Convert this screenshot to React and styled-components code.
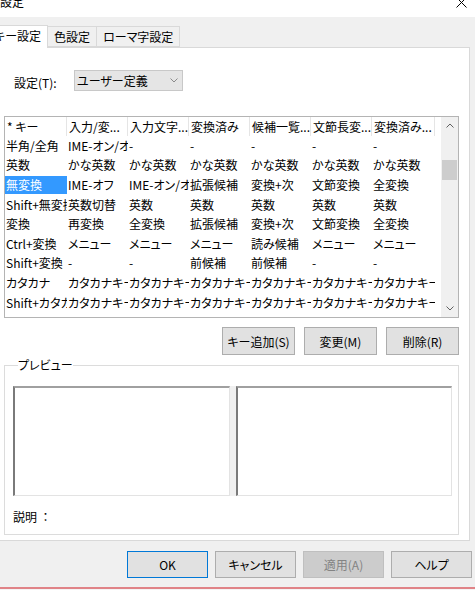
import React from 'react';
import styled, { createGlobalStyle } from 'styled-components';

const GlobalStyle = createGlobalStyle`
  html, body {
    margin: 0;
    padding: 0;
    background: #ffffff;
  }
  body {
    font-family: "Noto Sans CJK JP", "Noto Sans", sans-serif;
    font-size: 12px;
    color: #000;
    font-feature-settings: "palt";
  }
`;

const headers = ['* キー', '入力/変...', '入力文字...', '変換済み', '候補一覧...', '文節長変...', '変換済み...'];

const rows = [
  ['半角/全角', 'IME-オン/オフ', '-', '-', '-', '-', '-'],
  ['英数', 'かな英数', 'かな英数', 'かな英数', 'かな英数', 'かな英数', 'かな英数'],
  ['無変換', 'IME-オフ', 'IME-オン/オフ', '拡張候補', '変換+次', '文節変換', '全変換'],
  ['Shift+無変換', '英数切替', '英数', '英数', '英数', '英数', '英数'],
  ['変換', '再変換', '全変換', '拡張候補', '変換+次', '文節変換', '全変換'],
  ['Ctrl+変換', 'メニュー', 'メニュー', 'メニュー', '読み候補', 'メニュー', 'メニュー'],
  ['Shift+変換', '-', '-', '前候補', '前候補', '-', '-'],
  ['カタカナ', 'カタカナキー', 'カタカナキー', 'カタカナキー', 'カタカナキー', 'カタカナキー', 'カタカナキー'],
  ['Shift+カタカナ', 'カタカナキー', 'カタカナキー', 'カタカナキー', 'カタカナキー', 'カタカナキー', 'カタカナキー'],
];

function Chevron({ up }) {
  return (
    <svg width="8" height="5" viewBox="0 0 8 5">
      <path
        d={up ? 'M0.5 4.5 L4 1 L7.5 4.5' : 'M0.5 0.5 L4 4 L7.5 0.5'}
        fill="none"
        stroke="#606060"
        strokeWidth="1"
      />
    </svg>
  );
}

function App() {
  return (
    <Window>
      <GlobalStyle />
      <TitleBar>
        <Title>設定</Title>
        <CloseIcon width="11" height="11" viewBox="0 0 11 11">
          <path d="M0.5 0.5 L10.5 10.5 M10.5 0.5 L0.5 10.5" stroke="#000" strokeWidth="1" />
        </CloseIcon>
      </TitleBar>

      <TabStrip>
        <Tab $active>キー設定</Tab>
        <Tab>色設定</Tab>
        <Tab>ローマ字設定</Tab>
      </TabStrip>

      <Panel>
        <SettingRow>
          <FieldLabel>設定(T):</FieldLabel>
          <Combo>
            <span>ユーザー定義</span>
            <ComboArrow>
              <svg width="8" height="5" viewBox="0 0 8 5">
                <path d="M0.5 0.5 L4 4 L7.5 0.5" fill="none" stroke="#8a8a8a" strokeWidth="1" />
              </svg>
            </ComboArrow>
          </Combo>
        </SettingRow>

        <ListView>
          <ListBody>
            <HeaderRow>
              {headers.map((h, i) => (
                <HeaderCell key={i}>{h}</HeaderCell>
              ))}
            </HeaderRow>
            {rows.map((r, ri) => (
              <DataRow key={ri}>
                {r.map((c, ci) => (
                  <DataCell key={ci} $selected={ri === 2 && ci === 0}>
                    {c}
                  </DataCell>
                ))}
              </DataRow>
            ))}
          </ListBody>
          <ScrollBar>
            <ScrollArrow>
              <Chevron up />
            </ScrollArrow>
            <ScrollTrack>
              <Thumb />
            </ScrollTrack>
            <ScrollArrow>
              <Chevron />
            </ScrollArrow>
          </ScrollBar>
        </ListView>

        <ActionRow>
          <Button>キー追加(S)</Button>
          <Button>変更(M)</Button>
          <Button>削除(R)</Button>
        </ActionRow>

        <Group>
          <Legend>プレビュー</Legend>
          <PreviewRow>
            <PreviewBox />
            <Splitter />
            <PreviewBox />
          </PreviewRow>
          <Description>説明 &nbsp;：</Description>
        </Group>
      </Panel>

      <BottomBar>
        <DialogButton $focused>OK</DialogButton>
        <DialogButton>キャンセル</DialogButton>
        <DialogButton $disabled>適用(A)</DialogButton>
        <DialogButton>ヘルプ</DialogButton>
      </BottomBar>
      <TaskEdge />
    </Window>
  );
}

const Window = styled.div`
  width: 475px;
  height: 590px;
  overflow: hidden;
  display: flex;
  flex-direction: column;
  background: #f0f0f0;
`;

const TitleBar = styled.div`
  height: 17px;
  flex: none;
  background: #ffffff;
  display: flex;
  justify-content: space-between;
  align-items: flex-start;
  overflow: hidden;
`;

const Title = styled.div`
  font-size: 12px;
  line-height: 12px;
  margin-top: -4px;
`;

const CloseIcon = styled.svg`
  margin-top: -3px;
  margin-right: 8px;
`;

const TabStrip = styled.div`
  height: 31px;
  flex: none;
  box-sizing: border-box;
  display: flex;
  align-items: flex-end;
  margin-left: -13px;
  margin-right: 5px;
  border-bottom: 1px solid #d9d9d9;
`;

const Tab = styled.div`
  box-sizing: border-box;
  height: ${({ $active }) => ($active ? '23px' : '21px')};
  margin-bottom: ${({ $active }) => ($active ? '-1px' : '0')};
  padding: ${({ $active }) => ($active ? '0 6px 2px' : '0 6px')};
  display: flex;
  align-items: center;
  background: ${({ $active }) => ($active ? '#ffffff' : '#f0f0f0')};
  border: 1px solid #d9d9d9;
  border-bottom: ${({ $active }) => ($active ? 'none' : '1px solid #d9d9d9')};
  border-left: ${({ $active }) => ($active ? '1px solid #d9d9d9' : 'none')};
  font-size: 12px;
  line-height: 14px;
  white-space: nowrap;
`;

const Panel = styled.div`
  flex: 1;
  background: #ffffff;
  margin-right: 5px;
  border-right: 1px solid #d9d9d9;
  border-bottom: 1px solid #d9d9d9;
  display: flex;
  flex-direction: column;
  padding: 22px 10px 0 4px;
`;

const SettingRow = styled.div`
  display: flex;
  align-items: center;
  height: 21px;
`;

const FieldLabel = styled.div`
  width: 70px;
  padding-left: 10px;
  box-sizing: border-box;
  margin-top: 3px;
  font-size: 12px;
`;

const Combo = styled.div`
  width: 109px;
  height: 21px;
  box-sizing: border-box;
  background: #e5e5e5;
  border: 1px solid #c8c8c8;
  display: flex;
  align-items: center;
  justify-content: space-between;
  padding: 0 4px 0 2px;
  font-size: 12px;
`;

const ComboArrow = styled.span`
  display: flex;
  align-items: center;
`;

const ListView = styled.div`
  margin-top: 25px;
  width: 455px;
  height: 202px;
  box-sizing: border-box;
  border: 1px solid #b4b4b4;
  display: flex;
`;

const ListBody = styled.div`
  flex: 1;
  overflow: hidden;
  font-size: 12px;
`;

const columns = '62px 61px 61px 61px 61px 61px 63px';

const HeaderRow = styled.div`
  display: grid;
  grid-template-columns: ${columns};
  height: 19px;
`;

const HeaderCell = styled.div`
  border-right: 1px solid #e5e5e5;
  padding-left: 2px;
  white-space: nowrap;
  overflow: hidden;
  display: flex;
  align-items: center;
  line-height: 14px;
`;

const DataRow = styled.div`
  display: grid;
  grid-template-columns: ${columns};
  height: 19.6px;
`;

const DataCell = styled.div`
  white-space: nowrap;
  overflow: hidden;
  display: flex;
  align-items: center;
  line-height: 14px;
  padding-left: 1px;
  margin: 1px 0 1px 0;
  background: ${({ $selected }) => ($selected ? '#3399ff' : 'transparent')};
  color: ${({ $selected }) => ($selected ? '#ffffff' : '#000000')};
`;

const ScrollBar = styled.div`
  width: 17px;
  flex: none;
  background: #f0f0f0;
  display: flex;
  flex-direction: column;
`;

const ScrollArrow = styled.div`
  height: 17px;
  display: flex;
  align-items: center;
  justify-content: center;
`;

const ScrollTrack = styled.div`
  flex: 1;
  padding-top: 26px;
`;

const Thumb = styled.div`
  height: 20px;
  margin: 0 1px;
  background: #cdcdcd;
`;

const ActionRow = styled.div`
  margin-top: 9px;
  width: 455px;
  display: flex;
  justify-content: flex-end;
  gap: 9px;
`;

const Button = styled.div`
  width: 73px;
  height: 28px;
  box-sizing: border-box;
  background: #e1e1e1;
  border: 1px solid #adadad;
  display: flex;
  align-items: center;
  justify-content: center;
  font-size: 12px;
`;

const Group = styled.fieldset`
  margin: 4px 0 0 0;
  padding: 0 6px 0 8px;
  width: 455px;
  height: 176px;
  box-sizing: border-box;
  border: 1px solid #dcdcdc;
  min-width: 0;
`;

const Legend = styled.legend`
  font-size: 12px;
  line-height: 12px;
  padding: 0;
  margin-left: 5px;
`;

const PreviewRow = styled.div`
  margin-top: 15px;
  display: flex;
  height: 110px;
`;

const PreviewBox = styled.div`
  flex: 1;
  box-sizing: border-box;
  background: #ffffff;
  border-style: solid;
  border-width: 2px 1px 1px 2px;
  border-color: #a0a0a0 #e3e3e3 #e3e3e3 #7a7a7a;
`;

const Splitter = styled.div`
  width: 6px;
  background: #f0f0f0;
`;

const Description = styled.div`
  margin-top: 12px;
  font-size: 12px;
`;

const BottomBar = styled.div`
  height: 46px;
  flex: none;
  box-sizing: border-box;
  display: flex;
  justify-content: flex-end;
  align-items: flex-start;
  gap: 7px;
  padding: 10px 3px 0 0;
`;

const DialogButton = styled.div`
  width: 81px;
  height: 27px;
  box-sizing: border-box;
  display: flex;
  align-items: center;
  justify-content: center;
  font-size: 12px;
  background: ${({ $disabled }) => ($disabled ? '#cccccc' : '#e1e1e1')};
  color: ${({ $disabled }) => ($disabled ? '#838383' : '#000000')};
  border: 1px solid
    ${({ $focused, $disabled }) => ($focused ? '#0078d7' : $disabled ? '#bfbfbf' : '#adadad')};
`;

const TaskEdge = styled.div`
  height: 2px;
  flex: none;
  background: #e08387;
  border-bottom: 1px solid #f4f4f4;
`;

export default App;
